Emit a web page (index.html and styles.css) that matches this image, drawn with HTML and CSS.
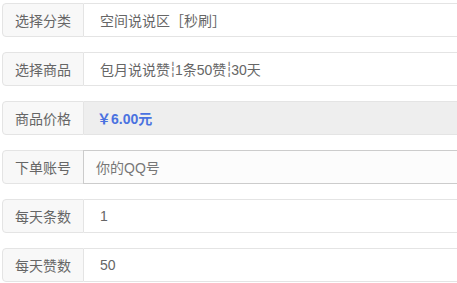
FILE: index.html
```html
<!DOCTYPE html>
<html>
<head>
<meta charset="utf-8">
<link rel="stylesheet" href="styles.css">
</head>
<body>
<div class="form">
  <div class="group">
    <div class="label">选择分类</div>
    <div class="field">空间说说区［秒刷］</div>
  </div>
  <div class="group">
    <div class="label">选择商品</div>
    <div class="field">包月说说赞<span class="sep">┆</span>1条50赞<span class="sep">┆</span>30天</div>
  </div>
  <div class="group">
    <div class="label">商品价格</div>
    <div class="field readonly"><span class="price">￥6.00元</span></div>
  </div>
  <div class="group">
    <div class="label">下单账号</div>
    <div class="field input"><span class="placeholder">你的QQ号</span></div>
  </div>
  <div class="group">
    <div class="label">每天条数</div>
    <div class="field">1</div>
  </div>
  <div class="group">
    <div class="label">每天赞数</div>
    <div class="field">50</div>
  </div>
</div>
</body>
</html>
```
FILE: styles.css
```css
html, body {
  margin: 0;
  padding: 0;
  background: #fff;
  overflow: hidden;
}
body {
  font-family: "Liberation Sans", "Noto Sans CJK SC", sans-serif;
  font-size: 14px;
  color: #666;
}
.form {
  display: flex;
  flex-direction: column;
  gap: 15px;
  padding: 3px 0 0 2px;
  width: 455px;
}
.group {
  display: flex;
  height: 34px;
}
.label {
  box-sizing: border-box;
  width: 82px;
  flex: none;
  display: flex;
  align-items: center;
  justify-content: center;
  background: #f8f8f8;
  border: 1px solid #e4e4e4;
  border-radius: 4px 0 0 4px;
  color: #666;
}
.field {
  box-sizing: border-box;
  flex: 1;
  display: flex;
  align-items: center;
  padding: 0 16px;
  border: 1px solid #e4e4e4;
  border-left: none;
  border-right: none;
  background: #fff;
  color: #666;
  white-space: nowrap;
}
.sep {
  font-family: "DejaVu Sans", sans-serif;
  color: #777;
  margin-left: -1.5px;
  letter-spacing: -2px;
}
.readonly {
  background: #eee;
  padding-left: 13px;
}
.price {
  color: #4a72e0;
  font-weight: bold;
}
.input {
  border-color: #ccc;
  border-left: 1px solid #ccc;
  background: #fcfcfc;
  padding-left: 12px;
  margin-left: -1px;
}
.placeholder {
  color: #777;
}
```
